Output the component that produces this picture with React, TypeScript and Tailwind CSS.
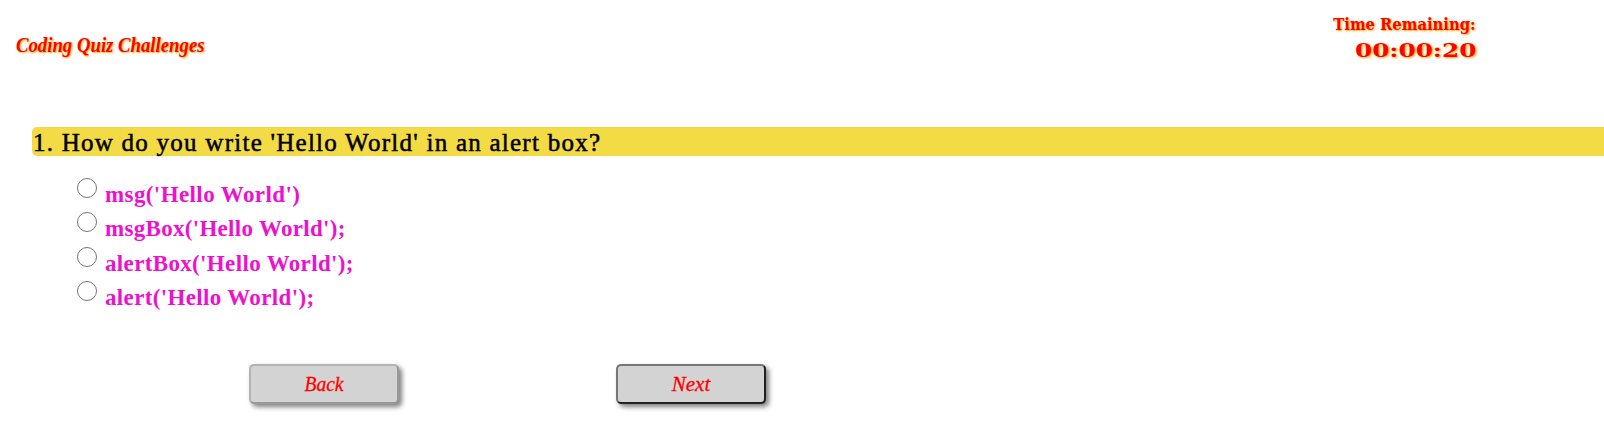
const options = [
  { text: "msg('Hello World')", spacing: 'tracking-[0.4px]' },
  { text: "msgBox('Hello World');", spacing: 'tracking-[0.3px]' },
  { text: "alertBox('Hello World');", spacing: 'tracking-[0.35px]' },
  { text: "alert('Hello World');", spacing: 'tracking-[0.35px]' },
];

export default function App() {
  return (
    <main className="h-[428px] w-full overflow-hidden bg-white">
      <header className="flex h-[127px] items-start justify-between pl-4 pr-32">
        <h1 className="pt-[33px] font-['Liberation_Serif',serif] text-[20px] font-bold italic leading-6 text-[#ff0000] [text-shadow:1px_1px_2px_orange]">
          <span className="inline-block origin-left scale-x-[0.937] whitespace-nowrap">Coding Quiz Challenges</span>
        </h1>
        <div className="flex flex-col items-end pt-[13px] font-bold text-[#ff0000] [text-shadow:1px_1px_2px_orange]">
          <span className="origin-right scale-x-[1.027] font-['DejaVu_Serif_Condensed','DejaVu_Serif',serif] text-[16px] leading-6">Time Remaining:</span>
          <span className="origin-right scale-x-[1.3] font-['DejaVu_Serif',serif] text-[19px] leading-[26px]">00:00:20</span>
        </div>
      </header>
      <section>
        <h2 className="ml-8 h-[29px] rounded-l-[5px] bg-[#f3db45] pl-px font-['Liberation_Serif',serif] text-[25px] leading-[31px] tracking-[1.25px] text-black [-webkit-text-stroke:0.5px_black]">
          1. How do you write 'Hello World' in an alert box?
        </h2>
        <div className="mt-[20px] flex flex-col pl-[77px]">
          {options.map((option) => (
            <label key={option.text} className="flex h-[34.67px] items-start">
              <input type="radio" name="answer" className="mt-[1.5px] size-5 shrink-0" />
              <span className={`ml-2 whitespace-nowrap pt-[4.5px] font-['Liberation_Serif',serif] text-[23px] font-bold leading-7 text-[#ee11cc] ${option.spacing}`}>
                {option.text}
              </span>
            </label>
          ))}
        </div>
      </section>
      <nav className="mt-[49px] flex gap-[217px] pl-[249px] font-['Liberation_Serif',serif] text-[21px] italic text-[#ff0000]">
        <button className="h-10 w-[150px] rounded-[5px] border-2 border-b-[#999] border-l-[#b3b3b3] border-r-[#999] border-t-[#b3b3b3] bg-[#d3d3d3] pt-[3px] shadow-[3px_3px_5px_gray]">
          <span className="inline-block scale-x-[0.93] [-webkit-text-stroke:0.3px_red]">Back</span>
        </button>
        <button className="h-10 w-[150px] rounded-[5px] border-2 border-b-[#212121] border-l-[#767676] border-r-[#212121] border-t-[#767676] bg-[#d3d3d3] pt-[3px] shadow-[3px_3px_5px_gray]">
          <span className="inline-block [-webkit-text-stroke:0.3px_red]">Next</span>
        </button>
      </nav>
    </main>
  );
}
